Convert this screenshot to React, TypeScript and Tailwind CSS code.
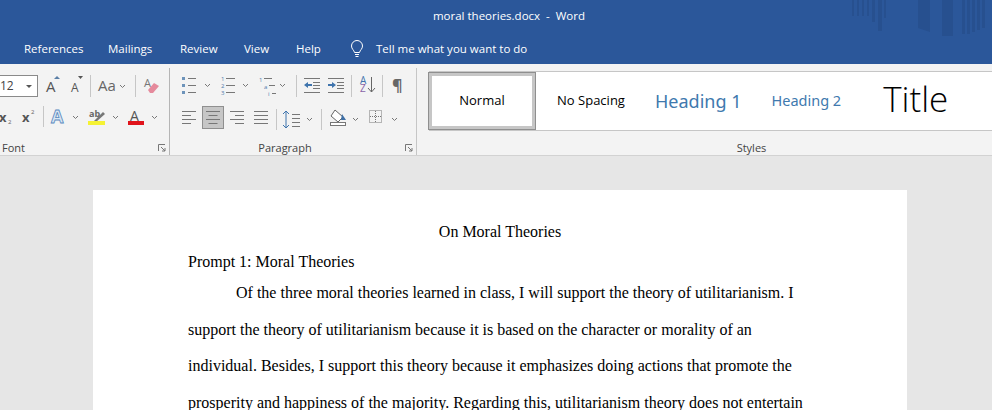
const uiFont = "font-['Open_Sans','Noto_Sans',sans-serif]"

function Chevron({ x, y }: { x: number; y: number }) {
  return <path d={`M${x} ${y}l2.5 2.5 2.5-2.5`} fill="none" stroke="#777" strokeWidth="1" />
}

function Ln({ x, y, w, c = '#777' }: { x: number; y: number; w: number; c?: string }) {
  return <rect x={x} y={y} width={w} height="1" fill={c} />
}

function Sep({ x, y, h }: { x: number; y: number; h: number }) {
  return <rect x={x} y={y} width="1" height={h} fill="#c6c6c6" />
}

function FontTools() {
  return (
    <svg width="164" height="36" viewBox="0 0 164 36" className="block">
      <text x="46" y="22" fontSize="15" fill="#555" fontFamily="Open Sans">A</text>
      <path d="M54 9l3-3 3 3z" fill="#5b7fa6" />
      <text x="71" y="22" fontSize="12" fill="#555" fontFamily="Open Sans">A</text>
      <path d="M78 6h5l-2.500 3z" fill="#555" />
      <Sep x={90} y={5} h={22} />
      <text x="98" y="21" fontSize="15" fill="#666" fontFamily="Open Sans">Aa</text>
      <Chevron x={120} y={15} />
      <Sep x={135} y={5} h={22} />
      <text x="144" y="17" fontSize="11" fill="#777" fontFamily="Open Sans">A</text>
      <path d="M148 20l6-7 5 3-6 7h-3z" fill="#e58a9c" />
    </svg>
  )
}

function Row2Font() {
  return (
    <svg width="164" height="34" viewBox="0 0 164 34" className="block">
      <text x="-1" y="22" fontSize="13" fontWeight="700" fill="#555" fontFamily="Open Sans">x</text>
      <text x="8" y="24" fontSize="6" fill="#666" fontFamily="Open Sans">2</text>
      <text x="22" y="22" fontSize="13" fontWeight="700" fill="#555" fontFamily="Open Sans">x</text>
      <text x="31" y="14" fontSize="6" fill="#666" fontFamily="Open Sans">2</text>
      <Sep x={43} y={6} h={21} />
      <text x="51" y="23" fontSize="18" fontWeight="700" fill="#d9e6f3" stroke="#5b8ac0" strokeWidth=".8" fontFamily="Open Sans">A</text>
      <Chevron x={73} y={16} />
      <text x="89" y="17" fontSize="9" fontWeight="700" fill="#666" fontFamily="Open Sans">ab</text>
      <path d="M94 21l9-9 2 2-9 8z" fill="#777" />
      <rect x="88" y="21" width="17" height="4" fill="#f5f233" />
      <Chevron x={113} y={16} />
      <text x="130" y="21" fontSize="14" fill="#555" fontFamily="Open Sans">A</text>
      <rect x="128" y="21" width="16" height="4" fill="#e0131b" />
      <Chevron x={152} y={16} />
    </svg>
  )
}

function ParagraphTools() {
  return (
    <svg width="240" height="36" viewBox="0 0 240 36" className="block">
      {[0, 7, 14].map((d) => (
        <g key={d}>
          <rect x="12" y={d + 7} width="3" height="3" fill="#6d93ba" />
          <Ln x={18} y={d + 8} w={8} />
        </g>
      ))}
      <Chevron x={35} y={14} />
      {[0, 7, 14].map((d, i) => (
        <g key={d}>
          <text x="51" y={d + 11} fontSize="6" fill="#4f7cab" fontFamily="Open Sans">{i + 1}</text>
          <Ln x={56} y={d + 8} w={9} />
        </g>
      ))}
      <Chevron x={73} y={14} />
      <text x="89" y="12" fontSize="6" fill="#4f7cab" fontFamily="Open Sans">1</text>
      <Ln x={94} y={8} w={8} />
      <text x="94" y="19" fontSize="6" fill="#4f7cab" fontFamily="Open Sans">a</text>
      <Ln x={99} y={15} w={6} />
      <text x="98" y="26" fontSize="6" fill="#4f7cab" fontFamily="Open Sans">i</text>
      <Ln x={102} y={23} w={4} />
      <Chevron x={110} y={14} />
      <Sep x={126} y={5} h={22} />
      <g>
        <Ln x={134} y={8} w={16} /><Ln x={143} y={12} w={7} /><Ln x={143} y={15} w={7} /><Ln x={143} y={18} w={7} /><Ln x={134} y={22} w={16} />
        <path d="M134 15l4-3v2h4v2h-4v2z" fill="#3f74ad" />
        <Ln x={158} y={8} w={16} /><Ln x={167} y={12} w={7} /><Ln x={167} y={15} w={7} /><Ln x={167} y={18} w={7} /><Ln x={158} y={22} w={16} />
        <path d="M166 15l-4-3v2h-4v2h4v2z" fill="#3f74ad" />
      </g>
      <Sep x={181} y={5} h={22} />
      <text x="190" y="14" fontSize="10" fill="#3f74ad" fontFamily="Open Sans">A</text>
      <text x="190" y="22" fontSize="10" fill="#8a63a8" fontFamily="Open Sans">Z</text>
      <path d="M201.500 7v15M198 18l3.500 4 3.500-4" fill="none" stroke="#666" />
      <Sep x={212} y={5} h={22} />
      <text x="222" y="21" fontSize="16" fontWeight="700" fill="#666" fontFamily="Open Sans">¶</text>
    </svg>
  )
}

function ParagraphRow2() {
  const lines = (x: number, alignment: 'l' | 'c' | 'r' | 'j') =>
    [0, 1, 2, 3].map((i) => {
      const w = alignment === 'j' ? 14 : i % 2 ? 9 : 14
      const dx = alignment === 'l' || alignment === 'j' ? 0 : alignment === 'c' ? (14 - w) / 2 : 14 - w
      return <Ln key={i} x={x + dx} y={8 + i * 4} w={w} />
    })
  return (
    <svg width="240" height="34" viewBox="0 0 240 34" className="block">
      <rect x="32.500" y="0.500" width="21" height="22" fill="#c6c6c6" stroke="#8f8f8f" />
      <g transform="translate(0,-3)">
        {lines(12, 'l')}
        {lines(36, 'c')}
        {lines(60, 'r')}
        {lines(84, 'j')}
      </g>
      <Sep x={106} y={3} h={21} />
      <path d="M116 5v17M113 8l3-3 3 3M113 19l3 3 3-3" fill="none" stroke="#3f74ad" />
      <Ln x={122} y={8} w={8} /><Ln x={122} y={12} w={8} /><Ln x={122} y={16} w={8} /><Ln x={122} y={20} w={8} />
      <Chevron x={137} y={12} />
      <Sep x={151} y={3} h={21} />
      <path d="M165 4l8 7-5 5-7-6z" fill="#fff" stroke="#666" />
      <path d="M172 8l4 6h-5z" fill="#3f6fa5" />
      <rect x="160.500" y="16.500" width="15" height="3" fill="#fff" stroke="#777" />
      <Chevron x={183} y={12} />
      <rect x="199.500" y="4.500" width="12" height="12" fill="none" stroke="#777" strokeDasharray="1 1" />
      <path d="M205.500 5v11M200 10.500h11" stroke="#777" strokeDasharray="1 1" />
      <Chevron x={222} y={12} />
    </svg>
  )
}

function Launcher() {
  return (
    <svg width="8" height="8" viewBox="0 0 8 8" className="block">
      <path d="M.5 7V.5H7M3 3l4 4M7 4v3H4" fill="none" stroke="#777" />
    </svg>
  )
}

export default function App() {
  return (
    <div className={`w-[992px] h-[410px] overflow-hidden bg-[#e6e6e6] ${uiFont}`}>
      <header className="relative h-[64px] bg-[#2b579a] text-white overflow-hidden">
        <svg width="142" height="40" viewBox="0 0 142 40" className="absolute right-0 top-0">
          <g fill="#27508f">
            <rect x="2" width="2" height="16" /><rect x="7" width="2" height="16" /><rect x="12" width="2" height="16" /><rect x="17" width="2" height="16" />
            <rect x="22" width="3" height="22" /><rect x="28" width="4" height="31" /><rect x="34" width="2" height="18" />
            <path d="M68 0h12v32l-12-4z" />
            <path d="M92 0h11v36h-11z" />
            <rect x="112" width="3" height="34" /><rect x="117" width="3" height="34" /><rect x="122" width="3" height="32" /><rect x="127" width="3" height="30" /><rect x="132" width="3" height="28" />
          </g>
        </svg>
        <div className="relative h-[32px] flex items-center justify-center text-[11.5px] pl-[26px]">
          <span className="whitespace-pre">moral theories.docx  -  Word</span>
        </div>
        <nav className="relative h-[32px] flex items-center text-[11.5px] pl-[24px] pt-[1px]">
          <span className="w-[84px]">References</span>
          <span className="w-[72px]">Mailings</span>
          <span className="w-[64px]">Review</span>
          <span className="w-[52px]">View</span>
          <span className="w-[54px]">Help</span>
          <svg width="14" height="18" viewBox="0 0 14 18" fill="none" stroke="#fff">
            <path d="M4.500 12.500C4 10 1.500 9 1.500 6a5.500 5.500 0 0 1 11 0c0 3-2.500 4-3 6.500zM5 14.500h4M5.500 16.500h3" />
          </svg>
          <span className="ml-[12px]">Tell me what you want to do</span>
        </nav>
      </header>

      <section className="h-[92px] bg-[#f3f3f3] border-b border-[#d2d2d2] flex">
        <div className="relative w-[170px] shrink-0 border-r border-[#b5b5b5] mt-[4px]">
          <div className="absolute left-0 top-[7px] w-[38px] h-[22px] bg-white border border-[#8a8a8a] border-l-0 flex items-center justify-between pr-[5px] text-[12px] text-[#444]">
            <span>12</span>
            <span className="w-0 h-0 border-l-[3px] border-r-[3px] border-t-[3px] border-l-transparent border-r-transparent border-t-[#555]" />
          </div>
          <div className="pt-[2px]">
            <FontTools />
          </div>
          <div className="absolute left-0 top-[32px]">
            <Row2Font />
          </div>
          <div className="absolute left-[2px] right-[3px] bottom-[1px] flex items-center justify-between text-[11px] leading-[12px] text-[#444]">
            <span>Font</span>
            <Launcher />
          </div>
        </div>

        <div className="relative w-[247px] shrink-0 border-r border-[#c6c6c6] mt-[4px]">
          <div className="pt-[2px]">
            <ParagraphTools />
          </div>
          <div className="absolute left-0 top-[38px]">
            <ParagraphRow2 />
          </div>
          <div className="absolute left-0 right-[3px] bottom-[1px] flex items-center text-[11px] leading-[12px] text-[#444]">
            <span className="flex-1 text-center pr-[5px]">Paragraph</span>
            <Launcher />
          </div>
        </div>

        <div className="relative flex-1 mt-[4px]">
          <div className="ml-[12px] mt-[3px] h-[60px] bg-white border-y border-[#c6c6c6] flex items-center text-black">
            <div className="w-[108px] h-[58px] -ml-[1px] border border-[#8f8f8f] outline-[3px] -outline-offset-[4px] outline-[#c6c6c6] flex items-center justify-center text-[13px]">Normal</div>
            <div className="w-[109px] text-center text-[13px] pl-[1px]">No Spacing</div>
            <div className="text-[18px] text-[#4079ae] ml-[10px] font-['Noto_Sans',sans-serif]">Heading 1</div>
            <div className="text-[14.5px] text-[#4079ae] ml-[30px] font-['Noto_Sans',sans-serif]">Heading 2</div>
            <div className="text-[35px] font-light ml-[42px] -mt-[4px]">Title</div>
          </div>
          <div className="absolute left-0 right-0 bottom-[1px] text-center text-[11px] leading-[12px] text-[#444] pl-[94px]">Styles</div>
        </div>
      </section>

      <main className="pt-[34px] pl-[93px]">
        <article className="w-[814px] h-[300px] bg-white px-[95px] pt-[30px] font-['Liberation_Serif',serif] text-[16px] text-black">
          <p className="text-center leading-[24px]">On Moral Theories</p>
          <p className="leading-[24px] mt-[6px]">Prompt 1: Moral Theories</p>
          <p className="indent-[48px] leading-[36.500px] mt-[1px]">
            Of the three moral theories learned in class, I will support the theory of utilitarianism. I support the theory of utilitarianism because it is based on the character or morality of an individual. Besides, I support this theory because it emphasizes doing actions that promote the prosperity and happiness of the majority. Regarding this, utilitarianism theory does not entertain
          </p>
        </article>
      </main>
    </div>
  )
}
